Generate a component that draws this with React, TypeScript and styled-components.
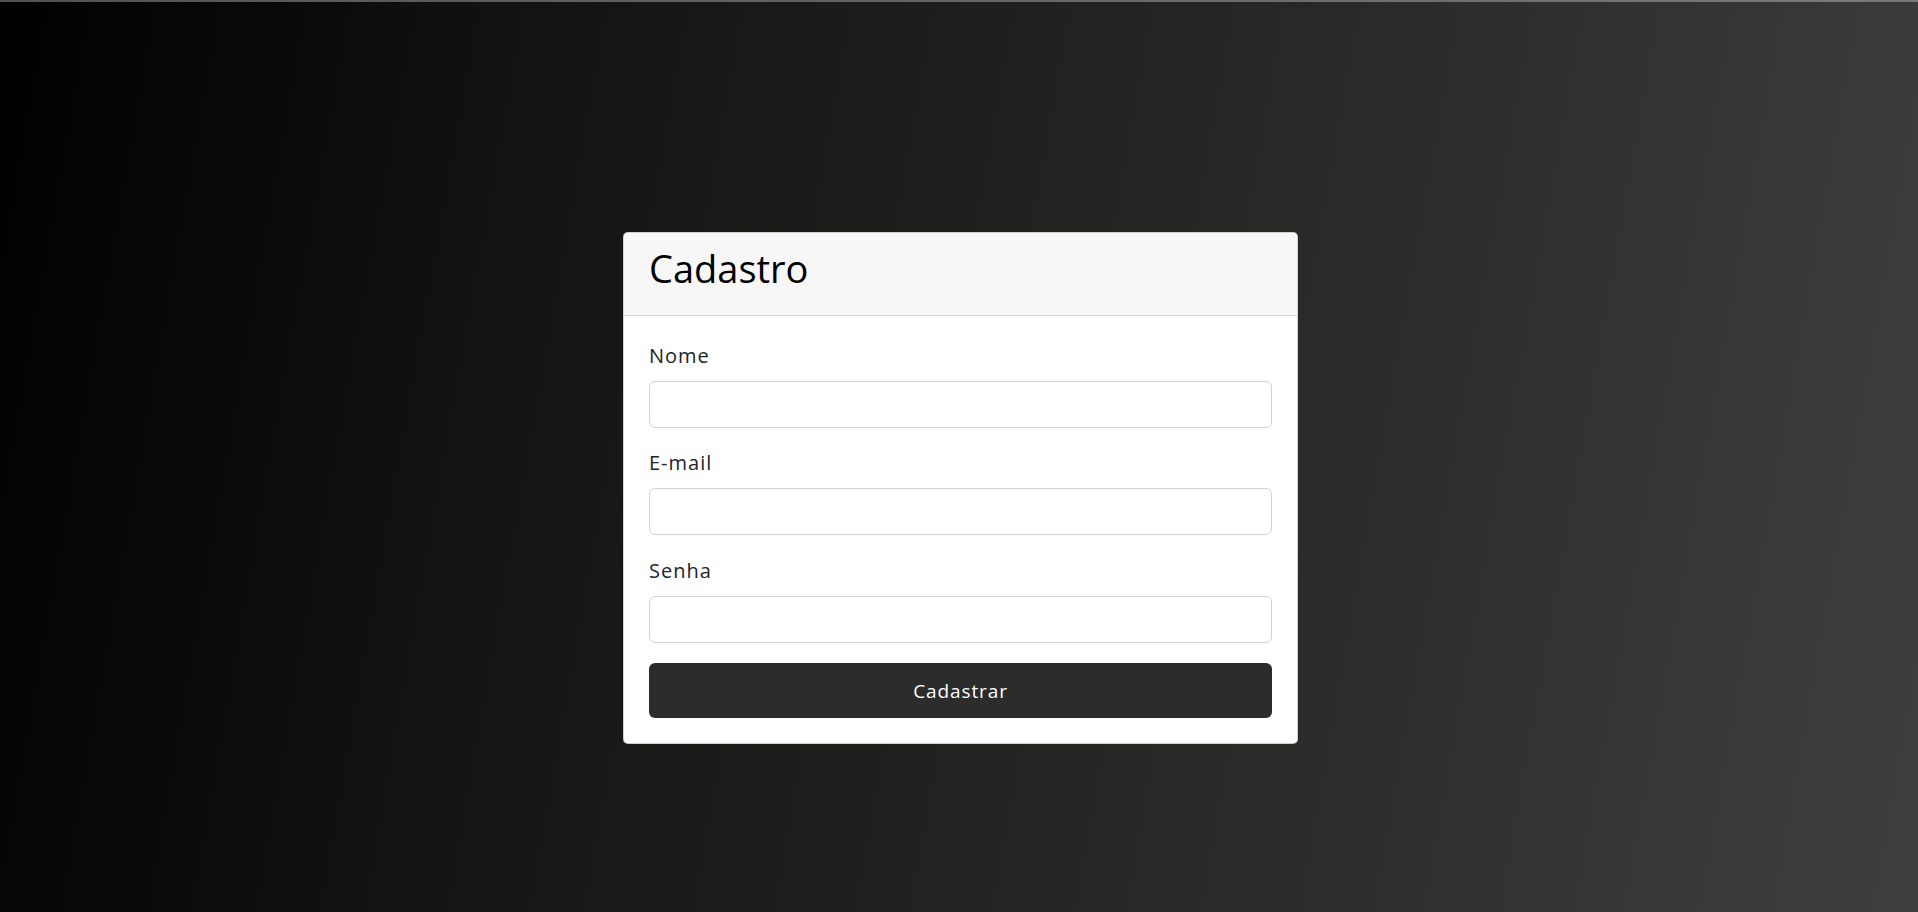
import React from "react";
import styled, { createGlobalStyle } from "styled-components";

const GlobalStyle = createGlobalStyle`
  *, *::before, *::after { box-sizing: border-box; }
  html, body { margin: 0; padding: 0; height: 100%; }
  body {
    font-family: "Open Sans", "Liberation Sans", sans-serif;
    background: #000;
  }
  #root { min-height: 100%; }
`;

const Page = styled.div`
  min-height: 100vh;
  display: flex;
  flex-direction: column;
  background: linear-gradient(100deg, #000000 0%, #121212 25%, #262624 60%, #3f3f3d 100%);
`;

const TopRule = styled.div`
  height: 2px;
  background: rgba(255, 255, 255, 0.32);
`;

const Main = styled.main`
  flex: 1;
  display: flex;
  justify-content: center;
  align-items: flex-start;
  padding: 230px 0 0 3px;
`;

const Card = styled.section`
  width: 675px;
  background: #ffffff;
  border: 1px solid rgba(0, 0, 0, 0.18);
  border-radius: 5px;
  overflow: hidden;
`;

const CardHeader = styled.header`
  background: #f7f7f7;
  border-bottom: 1px solid #d6d6d6;
  padding: 11px 25px 23px;
`;

const Title = styled.h1`
  margin: 0;
  font-size: 38px;
  line-height: 48px;
  font-weight: 400;
  color: #000000;
`;

const Form = styled.form`
  display: flex;
  flex-direction: column;
  padding: 25px;
`;

const Field = styled.div<{ $gap: number }>`
  display: flex;
  flex-direction: column;
  margin-bottom: ${(p) => p.$gap}px;
`;

const Label = styled.label`
  font-size: 20px;
  line-height: 30px;
  letter-spacing: 1px;
  color: #212529;
  margin-bottom: 10px;
`;

const Input = styled.input`
  height: 47px;
  width: 100%;
  border: 1px solid #cfd2d5;
  border-radius: 6px;
  padding: 0 14px;
  font-family: inherit;
  font-size: 18px;
  color: #212529;
  background: #ffffff;
  outline: none;
`;

const SubmitButton = styled.button`
  height: 55px;
  width: 100%;
  border: none;
  border-radius: 6px;
  background: #2c2c2c;
  color: #ffffff;
  font-family: inherit;
  font-size: 19px;
  letter-spacing: 0.9px;
  display: flex;
  align-items: center;
  justify-content: center;
  cursor: pointer;
`;

const fields = [
  { id: "nome", label: "Nome", type: "text", gap: 20 },
  { id: "email", label: "E-mail", type: "email", gap: 21 },
  { id: "senha", label: "Senha", type: "password", gap: 20 },
];

export default function App() {
  return (
    <>
      <GlobalStyle />
      <Page>
        <TopRule />
        <Main>
          <Card>
            <CardHeader>
              <Title>Cadastro</Title>
            </CardHeader>
            <Form onSubmit={(e) => e.preventDefault()}>
              {fields.map((f) => (
                <Field key={f.id} $gap={f.gap}>
                  <Label htmlFor={f.id}>{f.label}</Label>
                  <Input id={f.id} type={f.type} />
                </Field>
              ))}
              <SubmitButton type="submit">Cadastrar</SubmitButton>
            </Form>
          </Card>
        </Main>
      </Page>
    </>
  );
}
